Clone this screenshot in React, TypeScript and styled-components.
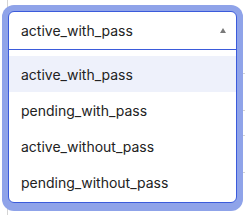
import React from 'react';
import styled, { createGlobalStyle } from 'styled-components';

const GlobalStyle = createGlobalStyle`
    html, body {
        margin: 0;
        padding: 0;
        background: #fff;
    }
    body {
        font-family: Inter, "Liberation Sans", sans-serif;
    }
`;

// Styled Components
const Page = styled.div`
    position: relative;
    width: 245px;
    height: 215px;
    overflow: hidden;
`;

const Table = styled.div`
    margin-left: 7px;
    padding-top: 73px;
    border-left: 1px solid #d4d4d4;
    height: 215px;
    box-sizing: border-box;
`;

const TableRow = styled.div<{ $h: number }>`
    height: ${(p) => p.$h}px;
    border-top: 1px solid #d4d4d4;
    box-sizing: border-box;
`;

const Dropdown = styled.div`
    position: absolute;
    left: 8px;
    top: 11px;
    width: 229px;
    height: 192px;
    box-sizing: border-box;
    background: #fff;
    border: 1px solid #3b5bdb;
    border-radius: 6px;
    box-shadow: 0 0 0 6px #8fa3e9, 0 2px 0 6px #8fa3e9;
    display: flex;
    flex-direction: column;
    overflow: hidden;
`;

const Header = styled.div`
    height: 37px;
    flex-shrink: 0;
    display: flex;
    align-items: center;
    justify-content: space-between;
    padding: 0 10px 0 12px;
    border-bottom: 1px solid #3b5bdb;
    font-size: 14px;
    color: #222;
`;

const Caret = styled.span`
    width: 0;
    height: 0;
    border-left: 3.5px solid transparent;
    border-right: 3.5px solid transparent;
    border-bottom: 5px solid #7a7a7a;
    margin-top: -1px;
`;

const List = styled.div`
    padding: 6px 0 4px;
    display: flex;
    flex-direction: column;
`;

const Option = styled.div<{ $active?: boolean }>`
    height: 36px;
    display: flex;
    align-items: center;
    padding-left: 12px;
    font-size: 14px;
    color: #222;
    background: ${(p) => (p.$active ? '#eef1fb' : 'transparent')};
`;

const options = ['active_with_pass', 'pending_with_pass', 'active_without_pass', 'pending_without_pass'];

const App: React.FC = () => {
    const selected = 'active_with_pass';

    return (
        <Page>
            <GlobalStyle />
            <Table>
                <TableRow $h={37} />
                <TableRow $h={25} />
                <TableRow $h={37} />
                <TableRow $h={24} />
            </Table>
            <Dropdown>
                <Header>
                    <span>{selected}</span>
                    <Caret />
                </Header>
                <List>
                    {options.map((o) => (
                        <Option key={o} $active={o === selected}>{o}</Option>
                    ))}
                </List>
            </Dropdown>
        </Page>
    );
};

export default App;
